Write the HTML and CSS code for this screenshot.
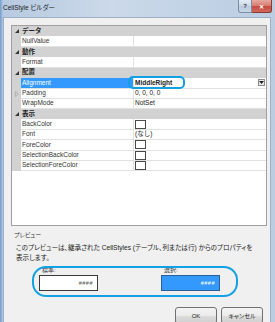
FILE: index.html
```html
<!DOCTYPE html>
<html lang="ja">
<head>
<meta charset="utf-8">
<link rel="stylesheet" href="styles.css">
</head>
<body>
<div class="window">
  <div class="titlebar">
    <span class="title">CellStyle ビルダー</span>
    <div class="caption">
      <span class="cbtn help">?</span>
      <span class="cbtn close">✕</span>
    </div>
  </div>
  <div class="client">
    <div class="pgrid">
      <div class="row cat"><span class="m"><svg class="exp" viewBox="0 0 4 4" width="4" height="4"><polygon points="4,0 4,4 0,4" fill="#333"/></svg></span><span class="n">データ</span><span class="v"></span></div>
      <div class="row prop"><span class="m"></span><span class="n">NullValue</span><span class="v"></span></div>
      <div class="row cat"><span class="m"><svg class="exp" viewBox="0 0 4 4" width="4" height="4"><polygon points="4,0 4,4 0,4" fill="#333"/></svg></span><span class="n">動作</span><span class="v"></span></div>
      <div class="row prop"><span class="m"></span><span class="n">Format</span><span class="v"></span></div>
      <div class="row cat"><span class="m"><svg class="exp" viewBox="0 0 4 4" width="4" height="4"><polygon points="4,0 4,4 0,4" fill="#333"/></svg></span><span class="n">配置</span><span class="v"></span></div>
      <div class="row prop sel"><span class="m"></span><span class="n">Alignment</span><span class="v"><b>MiddleRight</b><span class="dd"><svg viewBox="0 0 5 3" width="5" height="3"><polygon points="0,0 5,0 2.5,3" fill="#222"/></svg></span></span></div>
      <div class="row prop"><span class="m"><svg class="col" viewBox="0 0 4 6" width="4" height="6"><polygon points="0.5,0.5 3.5,3 0.5,5.5" fill="none" stroke="#aaa" stroke-width="0.8"/></svg></span><span class="n">Padding</span><span class="v">0, 0, 0, 0</span></div>
      <div class="row prop"><span class="m"></span><span class="n">WrapMode</span><span class="v">NotSet</span></div>
      <div class="row cat"><span class="m"><svg class="exp" viewBox="0 0 4 4" width="4" height="4"><polygon points="4,0 4,4 0,4" fill="#333"/></svg></span><span class="n">表示</span><span class="v"></span></div>
      <div class="row prop"><span class="m"></span><span class="n">BackColor</span><span class="v"><span class="sw"></span></span></div>
      <div class="row prop"><span class="m"></span><span class="n">Font</span><span class="v">(なし)</span></div>
      <div class="row prop"><span class="m"></span><span class="n">ForeColor</span><span class="v"><span class="sw"></span></span></div>
      <div class="row prop"><span class="m"></span><span class="n">SelectionBackColor</span><span class="v"><span class="sw"></span></span></div>
      <div class="row prop"><span class="m"></span><span class="n">SelectionForeColor</span><span class="v"><span class="sw"></span></span></div>
      <div class="mark mark-align"></div>
    </div>
    <div class="preview">
      <div class="plabel">プレビュー</div>
      <p class="pdesc">このプレビューは、継承された CellStyles (テーブル、列または行) からのプロパティを表示します。</p>
      <div class="samples">
        <div class="sample">
          <span class="slabel">標準:</span>
          <div class="box std">####</div>
        </div>
        <div class="sample">
          <span class="slabel">選択:</span>
          <div class="box selb">####</div>
        </div>
        <div class="mark mark-preview"></div>
      </div>
    </div>
    <div class="buttons">
      <button class="btn">OK</button>
      <button class="btn">キャンセル</button>
    </div>
  </div>
</div>
</body>
</html>
```
FILE: styles.css
```css
* { box-sizing: border-box; margin: 0; padding: 0; }
html, body { width: 275px; height: 322px; overflow: hidden; }
body {
  font-family: "Liberation Sans", "Noto Sans CJK JP", sans-serif;
  font-size: 6.5px;
  color: #222;
  background: #c8d7e8;
}
.window {
  width: 275px;
  height: 322px;
  display: flex;
  flex-direction: column;
  background: linear-gradient(90deg, #6f9bd0 0, #b7cae1 3px, #cbd9e9 40%, #c2d3e6 70%, #bccde2 100%);
}
.titlebar {
  height: 17px;
  flex: none;
  display: flex;
  justify-content: space-between;
  align-items: flex-start;
  padding-left: 3px;
}
.title {
  line-height: 16px;
  font-size: 6.5px;
  font-feature-settings: "palt";
  color: #1c1c1c;
}
.caption { display: flex; margin-right: 3px; }
.cbtn {
  height: 13px;
  display: flex;
  align-items: center;
  justify-content: center;
  font-size: 6px;
  border: 1px solid #7d8ea3;
  border-top: none;
}
.help {
  width: 14px;
  border-radius: 0 0 0 3px;
  background: linear-gradient(#e4ecf5, #c9d6e6 50%, #b8c8dc 51%, #c7d6e8);
  color: #333;
  font-weight: bold;
}
.close {
  width: 20px;
  border-left: none;
  border-color: #8a3a36;
  border-radius: 0 0 3px 0;
  background: linear-gradient(#e8a99f, #d67a6e 50%, #c44a3e 51%, #d2685c);
  color: #fff;
  font-weight: bold;
}
.client {
  flex: 1;
  margin: 0 4px 0 3px;
  background: #f0f0f0;
  border: 1px solid #9fb0c4;
  border-bottom: none;
  padding: 7px 3px 0 7px;
  display: flex;
  flex-direction: column;
}
.pgrid {
  position: relative;
  height: 201px;
  flex: none;
  border: 1px solid #a0a0a0;
  background: #fff;
}
.row {
  height: 10.35px;
  display: grid;
  grid-template-columns: 9px 112px 1fr;
  line-height: 10px;
  white-space: nowrap;
}
.row .m { display: flex; align-items: center; justify-content: center; }
.cat { background: #d2d2d2; }
.cat .n { font-weight: bold; padding-left: 1px; color: #222; }
.prop .m { background: #d2d2d2; }
.prop .n, .prop .v { border-bottom: 1px solid #e2e2e2; }
.prop .n { padding-left: 1px; color: #333; }
.prop .v { border-left: 1px solid #e2e2e2; padding-left: 1px; display: flex; align-items: center; color: #222; }
.sel .n { background: #3399ff; color: #fff; }
.sel .v { justify-content: space-between; }
.dd {
  width: 7px;
  height: 7px;
  margin-right: 1px;
  border: 1px solid #8a8a8a;
  background: #e8e8e8;
  display: flex;
  align-items: center;
  justify-content: center;
}
.sw {
  width: 11px;
  height: 9px;
  border: 1px solid #4a4a4a;
  background: #fff;
  margin-left: 0;
}
.mark {
  position: absolute;
  border: 2px solid #13a1e6;
}
.mark-align {
  left: 116px;
  top: 50px;
  width: 57px;
  height: 13px;
  border-radius: 5px;
}
.preview {
  display: flex;
  flex-direction: column;
  font-feature-settings: "palt";
}
.plabel {
  margin: 4px 0 0 3px;
  line-height: 10px;
  color: #333;
  font-size: 6px;
}
.pdesc {
  margin: 3px 0 0 5px;
  width: 240px;
  line-height: 10px;
  font-size: 6.6px;
  color: #222;
}
.samples {
  position: relative;
  display: flex;
  gap: 63px;
  padding-left: 28px;
  margin-top: 2px;
}
.sample { display: flex; flex-direction: column; width: 59px; }
.slabel { line-height: 10px; padding-left: 3px; font-size: 6px; color: #333; }
.box {
  height: 16px;
  border: 1px solid #3a3a3a;
  display: flex;
  align-items: center;
  justify-content: flex-end;
  padding-right: 4px;
  font-size: 5.5px;
  letter-spacing: 0.5px;
}
.std { background: #fff; color: #555; }
.selb { background: #3399ff; border-color: #2a5f97; color: #fff; }
.mark-preview {
  left: 21px;
  top: 1px;
  width: 206px;
  height: 31px;
  border-radius: 14px;
}
.buttons {
  display: flex;
  justify-content: flex-end;
  gap: 4px;
  margin: 16px 4px 0 0;
}
.btn {
  width: 42px;
  height: 17px;
  border: 1px solid #707070;
  border-radius: 3px;
  background: linear-gradient(#f3f3f3, #ebebeb 50%, #dddddd 51%, #cfcfcf);
  font-family: "Liberation Sans", "Noto Sans CJK JP", sans-serif;
  font-size: 6px;
  color: #222;
  font-feature-settings: "palt";
}
```
